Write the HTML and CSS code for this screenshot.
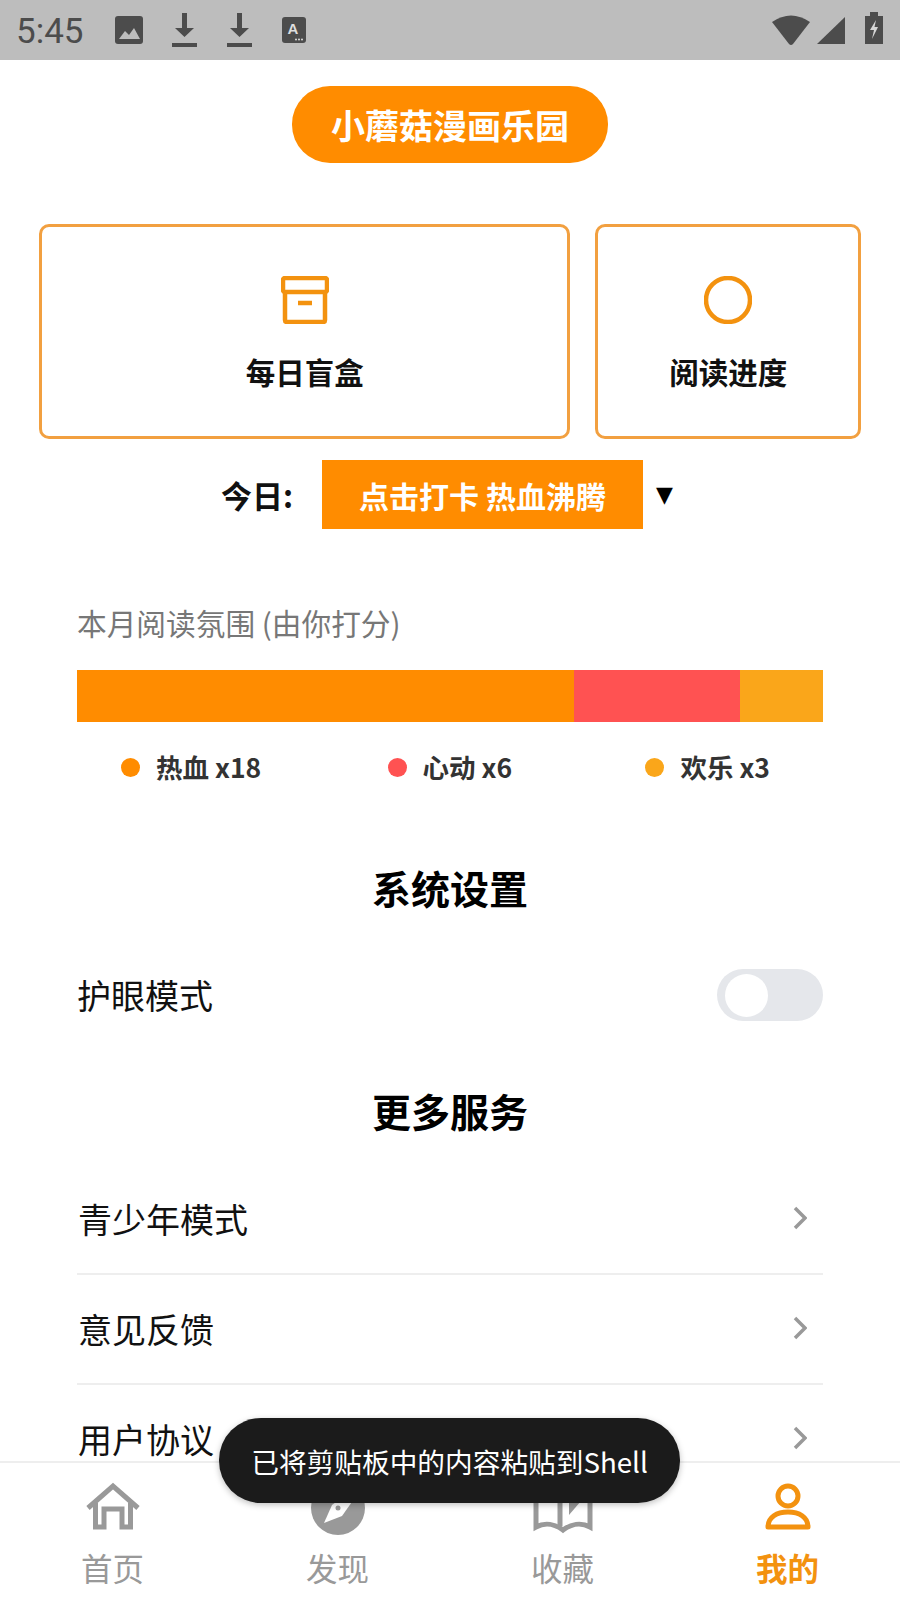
FILE: index.html
```html
<!DOCTYPE html>
<html lang="zh-CN">
<head>
<meta charset="utf-8">
<title>小蘑菇漫画乐园</title>
<link rel="stylesheet" href="styles.css">
</head>
<body>
<div class="app">
  <header class="status">
    <span class="time">5:45</span>
    <svg class="si si-img" viewBox="0 0 28 28"><rect width="28" height="28" rx="3" fill="#4c4c4c"/><path d="M4 23 L10 15 L14 19 L19 12 L25 23 Z" fill="#bdbdbd"/></svg>
    <svg class="si si-dl" viewBox="0 0 25 34"><path d="M10 0 H15 V15 H22 L12.5 24 L3 15 H10 Z M0 30 H25 V34 H0 Z" fill="#4c4c4c"/></svg>
    <svg class="si si-dl" viewBox="0 0 25 34"><path d="M10 0 H15 V15 H22 L12.5 24 L3 15 H10 Z M0 30 H25 V34 H0 Z" fill="#4c4c4c"/></svg>
    <svg class="si si-a" viewBox="0 0 24 26"><rect width="24" height="26" rx="3" fill="#4c4c4c"/><text x="11" y="17" text-anchor="middle" class="si-a-letter">A</text><circle cx="14" cy="22.5" r="1" fill="#ddd"/><circle cx="17" cy="22.5" r="1" fill="#ddd"/><circle cx="20" cy="22.5" r="1" fill="#ddd"/></svg>
    <span class="status-space"></span>
    <svg class="si si-wifi" viewBox="0 0 38 30"><path d="M0 7 Q19 -6 38 7 L21 29 Q19 31 17 29 Z" fill="#4c4c4c"/></svg>
    <svg class="si si-signal" viewBox="0 0 28 27"><path d="M0 27 L28 0 V27 Z" fill="#4c4c4c"/></svg>
    <svg class="si si-batt" viewBox="0 0 18 32"><path d="M5 0 H13 V4 H18 V32 H0 V4 H5 Z" fill="#4c4c4c"/><path d="M11 8 L5 18 H9 L7 27 L13 15 H9.500 Z" fill="#d6d6d6"/></svg>
  </header>

  <main class="content">
    <div class="pill">小蘑菇漫画乐园</div>

    <section class="cards">
      <div class="card">
        <svg class="card-icon" viewBox="0 0 48 48"><rect x="2" y="2" width="44" height="14" rx="2" class="ic"/><path d="M4 16 V44 Q4 46 6 46 H42 Q44 46 44 44 V16" class="ic"/><path d="M17 27 H31" class="ic"/></svg>
        <div class="card-label">每日盲盒</div>
      </div>
      <div class="card">
        <svg class="card-icon" viewBox="0 0 48 48"><circle cx="24" cy="24" r="22" class="ic"/></svg>
        <div class="card-label">阅读进度</div>
      </div>
    </section>

    <section class="today">
      <span class="today-label">今日:</span>
      <span class="today-btn">点击打卡 热血沸腾</span>
      <span class="today-arrow">▼</span>
    </section>

    <section class="mood">
      <div class="mood-title">本月阅读氛围 (由你打分)</div>
      <div class="bar">
        <div class="seg seg-a"></div>
        <div class="seg seg-b"></div>
        <div class="seg seg-c"></div>
      </div>
      <div class="legend">
        <div class="legend-item"><i class="dot dot-a"></i>热血 x18</div>
        <div class="legend-item legend-mid"><i class="dot dot-b"></i>心动 x6</div>
        <div class="legend-item"><i class="dot dot-c"></i>欢乐 x3</div>
      </div>
    </section>

    <h2 class="heading heading-sys">系统设置</h2>
    <div class="setting">
      <span class="row-text">护眼模式</span>
      <span class="toggle"><i class="knob"></i></span>
    </div>

    <h2 class="heading heading-more">更多服务</h2>
    <ul class="list">
      <li class="row"><span class="row-text">青少年模式</span><svg class="chev" viewBox="0 0 14 24"><path d="M2 2 L12 12 L2 22"/></svg></li>
      <li class="row"><span class="row-text">意见反馈</span><svg class="chev" viewBox="0 0 14 24"><path d="M2 2 L12 12 L2 22"/></svg></li>
      <li class="row"><span class="row-text">用户协议</span><svg class="chev" viewBox="0 0 14 24"><path d="M2 2 L12 12 L2 22"/></svg></li>
    </ul>
  </main>

  <nav class="tabs">
    <div class="tab">
      <svg class="tab-icon" viewBox="0 0 60 50"><path d="M5 26 L30 4 L55 26" class="ts"/><path d="M12.500 21 V45 H21 V27 H39 V45 H47.500 V21" class="ts"/></svg>
      <span>首页</span>
    </div>
    <div class="tab">
      <svg class="tab-icon tab-icon-round" viewBox="0 0 60 60"><circle cx="30" cy="29" r="27" fill="#999"/><path d="M16 44 L24 26 L40 14 L46 20 L34 37 Z" fill="#fff"/><circle cx="30" cy="29" r="2.500" fill="#999"/></svg>
      <span>发现</span>
    </div>
    <div class="tab">
      <svg class="tab-icon" viewBox="0 0 60 50"><path d="M3 5 V45 C12 40 22 42 30 48 C38 42 48 40 57 45 V5" class="ts"/><path d="M27 8 V44" class="ts"/><path d="M36 33 L48 19 H36 Z" fill="#999"/></svg>
      <span>收藏</span>
    </div>
    <div class="tab tab-on">
      <svg class="tab-icon" viewBox="0 0 60 50"><circle cx="30" cy="14" r="10" class="to"/><path d="M10 45 H50 C50 35 41 30 30 30 C19 30 10 35 10 45 Z" class="to"/></svg>
      <span>我的</span>
    </div>
  </nav>

  <div class="toast">已将剪贴板中的内容粘贴到Shell</div>
</div>
</body>
</html>
```

FILE: styles.css
```css
* { box-sizing: border-box; }
html, body { margin: 0; padding: 0; background: #fff; }
body { font-family: "Noto Sans CJK SC", "Noto Sans", sans-serif; color: #111; }
.app { position: relative; width: 900px; height: 1600px; display: flex; flex-direction: column; overflow: hidden; background: #fff; }

/* status bar */
.status { flex: none; height: 60px; background: #bdbdbd; display: flex; align-items: center; padding: 0 17px 0 16px; }
.time { width: 99px; font-family: Roboto, sans-serif; font-size: 35px; line-height: 60px; padding-top: 3px; color: #4c4c4c; }
.si { display: block; flex: none; }
.si-img { width: 28px; height: 28px; margin-right: 29px; }
.si-dl { width: 25px; height: 34px; margin-right: 30px; }
.si-a { width: 24px; height: 26px; }
.si-a-letter { font-family: "Liberation Sans", sans-serif; font-size: 15px; font-weight: 700; fill: #ddd; }
.status-space { flex: 1; }
.si-wifi { width: 38px; height: 30px; margin-top: -1px; margin-right: 7px; }
.si-signal { width: 28px; height: 27px; margin-top: 1px; margin-right: 20px; }
.si-batt { width: 18px; height: 32px; margin-top: -4px; }

.content { flex: 1; min-height: 0; }

.pill { width: 316px; height: 77px; margin: 26px auto 0; background: #ff8c00; color: #fff; border-radius: 38px; display: flex; align-items: center; justify-content: center; font-size: 34px; font-weight: 700; }

/* cards */
.cards { display: grid; grid-template-columns: 2fr 1fr; gap: 25px; margin-top: 61px; padding: 0 39px; }
.card { height: 215px; border: 3px solid #f2a040; border-radius: 10px; display: flex; flex-direction: column; align-items: center; padding-top: 49px; }
.card-icon { display: block; width: 48px; height: 48px; }
.ic { fill: none; stroke: #f3920f; stroke-width: 4.500; stroke-linejoin: round; }
.card-label { margin-top: 25px; font-size: 29.500px; line-height: 44px; font-weight: 700; color: #111; }

/* today row */
.today { display: flex; align-items: center; margin-top: 21px; padding-left: 221px; }
.today-label { width: 101px; font-size: 31px; font-weight: 700; }
.today-btn { width: 321px; height: 69px; background: #ff8c00; color: #fff; display: flex; align-items: center; justify-content: center; font-size: 30px; font-weight: 700; }
.today-arrow { margin-left: 13px; font-family: "DejaVu Sans", sans-serif; font-size: 22px; color: #000; }

/* mood */
.mood { margin-top: 74px; padding: 0 77px; }
.mood-title { font-size: 29.700px; line-height: 40px; color: #777; }
.bar { display: flex; height: 52px; margin-top: 27px; }
.seg-a { flex: 18; background: #ff8c00; }
.seg-b { flex: 6; background: #ff5252; }
.seg-c { flex: 3; background: #faa61a; }
.legend { display: flex; justify-content: space-between; margin-top: 27px; padding: 0 53px 0 44px; }
.legend-item { display: flex; align-items: center; gap: 16px; font-size: 26.500px; line-height: 36px; font-weight: 700; color: #333; }
.legend-mid { margin-right: 7px; }
.dot { display: block; width: 19px; height: 19px; border-radius: 50%; }
.dot-a { background: #ff8c00; }
.dot-b { background: #ff5252; }
.dot-c { background: #faa61a; }

/* settings */
.heading { margin: 0; text-align: center; font-size: 39px; line-height: 50px; font-weight: 700; color: #000; }
.heading-sys { margin-top: 77px; }
.heading-more { margin-top: 64px; }
.setting { display: flex; align-items: center; justify-content: space-between; margin: 57px 77px 0; height: 52px; }
.row-text { font-size: 34px; line-height: 40px; color: #111; }
.toggle { display: flex; align-items: center; width: 106px; height: 52px; padding-left: 8px; background: #e5e7eb; border-radius: 26px; }
.knob { display: block; width: 43px; height: 43px; border-radius: 50%; background: #fff; }

/* list */
.list { list-style: none; margin: 30px 77px 0; padding: 0; }
.row { display: flex; align-items: center; justify-content: space-between; height: 110px; padding: 0 16px 0 1px; border-bottom: 2.500px solid #eeeeee; }
.chev { display: block; width: 14px; height: 24px; fill: none; stroke: #999; stroke-width: 3.500; margin-top: -2px; }

/* tabs */
.tabs { position: relative; flex: none; height: 139px; background: #fff; border-top: 2px solid #eeeeee; display: grid; grid-template-columns: repeat(4, 1fr); }
.tab { display: flex; flex-direction: column; align-items: center; color: #999; font-size: 31.500px; line-height: 42px; }
.tab-icon { display: block; width: 60px; height: 50px; margin-top: 19px; margin-bottom: 14px; overflow: visible; }
.tab-icon-round { height: 60px; margin-top: 16px; margin-bottom: 7px; }
.ts { fill: none; stroke: #999; stroke-width: 5; }
.to { fill: none; stroke: #f3920f; stroke-width: 5; stroke-linejoin: round; }
.tab-on { color: #f3920f; font-weight: 700; }

/* toast */
.toast { position: absolute; left: 219px; top: 1418px; width: 461px; height: 85px; border-radius: 42px; background: #1b1b1b; color: #fff; font-size: 27.700px; display: flex; align-items: center; justify-content: center; box-shadow: 0 2px 6px rgba(0,0,0,.25); }
```
